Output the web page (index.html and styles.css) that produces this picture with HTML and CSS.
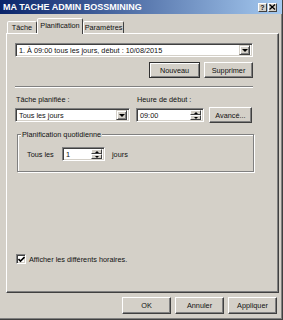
FILE: index.html
```html
<!DOCTYPE html>
<html lang="fr">
	<head>
		<meta charset="UTF-8">
		<title>MA TACHE ADMIN BOSSMINING</title>
		<link rel="stylesheet" href="styles.css">
	</head>
	<body>
		<div class="window">
			<div class="titlebar">
				<span class="title">MA TACHE ADMIN BOSSMINING</span>
				<div class="title-buttons">
					<span class="tbtn help">?</span>
					<span class="tbtn close">
						<svg width="7" height="6" viewBox="0 0 7 6"><path d="M0.5 0.5 L6 5.5 M6 0.5 L0.5 5.5" stroke="#000" stroke-width="1.3"/></svg>
					</span>
				</div>
			</div>

			<div class="client">
				<div class="tabs">
					<div class="tab tab-task">Tâche</div>
					<div class="tab tab-plan active">Planification</div>
					<div class="tab tab-params">Paramètres</div>
				</div>

				<div class="panel">
					<div class="combo">
						<span class="combo-text">1. À 09:00 tous les jours, début : 10/08/2015</span>
						<span class="drop-btn"><span class="arrow-down"></span></span>
					</div>

					<div class="btn-row">
						<button class="btn btn-default btn-new">Nouveau</button>
						<button class="btn btn-delete">Supprimer</button>
					</div>

					<div class="separator"></div>

					<div class="schedule-row">
						<div class="field field-task">
							<div class="field-label">Tâche planifiée :</div>
							<div class="field-controls">
								<div class="combo combo-task">
									<span class="combo-text">Tous les jours</span>
									<span class="drop-btn"><span class="arrow-down"></span></span>
								</div>
							</div>
						</div>
						<div class="field field-time">
							<div class="field-label">Heure de début :</div>
							<div class="field-controls">
								<div class="spin-box time-box">
									<span class="spin-text">09:00</span>
									<span class="spin">
										<span class="spin-btn"><span class="arrow-up"></span></span>
										<span class="spin-btn"><span class="arrow-small-down"></span></span>
									</span>
								</div>
								<button class="btn btn-advanced">Avancé...</button>
							</div>
						</div>
					</div>

					<fieldset class="group">
						<legend>Planification quotidienne</legend>
						<div class="repeat-row">
							<span class="repeat-label">Tous les</span>
							<div class="spin-box days-box">
								<span class="spin-text">1</span>
								<span class="spin">
									<span class="spin-btn"><span class="arrow-up"></span></span>
									<span class="spin-btn"><span class="arrow-small-down"></span></span>
								</span>
							</div>
							<span>jours</span>
						</div>
					</fieldset>

					<label class="check-row">
						<span class="checkbox">
							<svg width="7" height="7" viewBox="0 0 7 7"><path d="M0.5 3 L2.5 5 L6.5 1" stroke="#000" stroke-width="1.6" fill="none"/></svg>
						</span>
						Afficher les différents horaires.
					</label>
				</div>

				<div class="footer">
					<button class="btn btn-footer">OK</button>
					<button class="btn btn-footer">Annuler</button>
					<button class="btn btn-footer">Appliquer</button>
				</div>
			</div>
		</div>
	</body>
</html>
```

FILE: styles.css
```css
body {
    margin: 0;
    font-family: "Liberation Sans", Arial, sans-serif;
    font-size: 7.3px;
    color: #111111;
    background-color: #d4d0c8;
}

.window {
    width: 283px;
    height: 320px;
    box-sizing: border-box;
    background-color: #d4d0c8;
    border-right: 1px solid #404040;
    border-bottom: 1px solid #404040;
    box-shadow: inset -1px -1px 0 #808080;
}

/* title bar */

.titlebar {
    height: 14px;
    display: flex;
    align-items: center;
    justify-content: space-between;
    padding: 0 5px 0 3px;
    background: linear-gradient(to right, #0a246a, #a6caf0);
}

.title {
    color: #ffffff;
    font-weight: bold;
    font-size: 9px;
    white-space: nowrap;
}

.title-buttons {
    display: flex;
    gap: 1px;
}

.tbtn {
    width: 9px;
    height: 9px;
    box-sizing: border-box;
    display: flex;
    align-items: center;
    justify-content: center;
    background-color: #d4d0c8;
    border: 1px solid;
    border-color: #ffffff #404040 #404040 #ffffff;
    font-weight: bold;
    font-size: 7px;
    line-height: 1;
}

/* tabs */

.client {
    padding: 4px 3px 0 6px;
}

.tabs {
    height: 15px;
    display: flex;
    align-items: flex-end;
    padding-left: 1px;
}

.tab {
    height: 12px;
    box-sizing: border-box;
    border: 1px solid;
    border-bottom: none;
    border-color: #ffffff #404040 transparent #ffffff;
    border-radius: 2px 2px 0 0;
    text-align: center;
    line-height: 11px;
    white-space: nowrap;
    background-color: #d4d0c8;
}

.tab-task {
    width: 30px;
}

.tab-plan {
    width: 46px;
}

.tab-params {
    width: 41px;
}

.tab.active {
    height: 16px;
    margin-bottom: -1px;
    line-height: 13px;
    position: relative;
    z-index: 1;
}

/* panel */

.panel {
    width: 273px;
    height: 260px;
    box-sizing: border-box;
    display: flex;
    flex-direction: column;
    padding: 9px 25px 28px 8px;
    border: 1px solid;
    border-color: #ffffff #404040 #404040 #ffffff;
    box-shadow: inset -1px -1px 0 #808080;
}

.combo,
.spin-box {
    height: 14px;
    box-sizing: border-box;
    display: flex;
    align-items: center;
    background-color: #ffffff;
    border: 1px solid;
    border-color: #808080 #ffffff #ffffff #808080;
    box-shadow: inset 1px 1px 0 #404040, inset -1px -1px 0 #d4d0c8;
    padding: 2px;
}

.combo-text,
.spin-text {
    flex: 1;
    padding-left: 1px;
    white-space: nowrap;
    overflow: hidden;
}

.drop-btn {
    width: 11px;
    height: 10px;
    box-sizing: border-box;
    display: flex;
    align-items: center;
    justify-content: center;
    background-color: #d4d0c8;
    border: 1px solid;
    border-color: #d4d0c8 #404040 #404040 #d4d0c8;
    box-shadow: inset 1px 1px 0 #ffffff, inset -1px -1px 0 #808080;
}

.arrow-down {
    width: 0;
    height: 0;
    border-left: 3px solid transparent;
    border-right: 3px solid transparent;
    border-top: 3px solid #000000;
}

.arrow-up {
    width: 0;
    height: 0;
    border-left: 2px solid transparent;
    border-right: 2px solid transparent;
    border-bottom: 2px solid #000000;
}

.arrow-small-down {
    width: 0;
    height: 0;
    border-left: 2px solid transparent;
    border-right: 2px solid transparent;
    border-top: 2px solid #000000;
}

.btn {
    box-sizing: border-box;
    padding: 0;
    font-family: inherit;
    font-size: inherit;
    color: #111111;
    background-color: #d4d0c8;
    border: 1px solid;
    border-color: #ffffff #404040 #404040 #ffffff;
    box-shadow: inset -1px -1px 0 #808080;
}

.btn-default {
    border-color: #303030;
    box-shadow: inset 1px 1px 0 #ffffff, inset -1px -1px 0 #808080;
}

.btn-row {
    display: flex;
    justify-content: flex-end;
    gap: 4px;
    margin-top: 5px;
}

.btn-new {
    width: 51px;
    height: 16px;
}

.btn-delete {
    width: 49px;
    height: 16px;
}

.separator {
    margin-top: 8px;
    border-top: 1px solid #808080;
    border-bottom: 1px solid #ffffff;
}

/* schedule */

.schedule-row {
    display: flex;
    gap: 6px;
    margin-top: 7px;
}

.field-label {
    height: 9px;
    line-height: 9px;
    padding-left: 1px;
}

.field-controls {
    height: 16px;
    margin-top: 3px;
    display: flex;
    align-items: center;
    gap: 5px;
}

.field-task {
    width: 115px;
}

.combo-task {
    width: 115px;
}

.time-box {
    width: 68px;
}

.spin {
    width: 11px;
    height: 10px;
    display: flex;
    flex-direction: column;
}

.spin-btn {
    flex: 1;
    box-sizing: border-box;
    display: flex;
    align-items: center;
    justify-content: center;
    background-color: #d4d0c8;
    border: 1px solid;
    border-color: #ffffff #404040 #404040 #ffffff;
}

.btn-advanced {
    width: 43px;
    height: 16px;
}

.group {
    margin: 7px -1px 0 2px;
    padding: 0 8px 10px 9px;
    border: 1px solid #808080;
    box-shadow: inset 1px 1px 0 #ffffff, 1px 1px 0 #ffffff;
}

.group legend {
    padding: 0 1px;
    margin-left: -6px;
    line-height: 9px;
    background-color: #d4d0c8;
}

.repeat-row {
    display: flex;
    align-items: center;
    gap: 7px;
    margin-top: 8px;
}

.repeat-label {
    width: 28px;
}

.days-box {
    width: 43px;
}

/* checkbox */

.check-row {
    margin-top: auto;
    display: flex;
    align-items: center;
    gap: 3px;
    padding-left: 1px;
    height: 10px;
}

.checkbox {
    width: 10px;
    height: 10px;
    box-sizing: border-box;
    display: flex;
    align-items: center;
    justify-content: center;
    background-color: #ffffff;
    border: 1px solid;
    border-color: #808080 #ffffff #ffffff #808080;
    box-shadow: inset 1px 1px 0 #404040, inset -1px -1px 0 #d4d0c8;
}

/* footer */

.footer {
    display: flex;
    justify-content: flex-end;
    gap: 4px;
    margin: 4px 2px 0 0;
}

.btn-footer {
    width: 49px;
    height: 17px;
}
```
